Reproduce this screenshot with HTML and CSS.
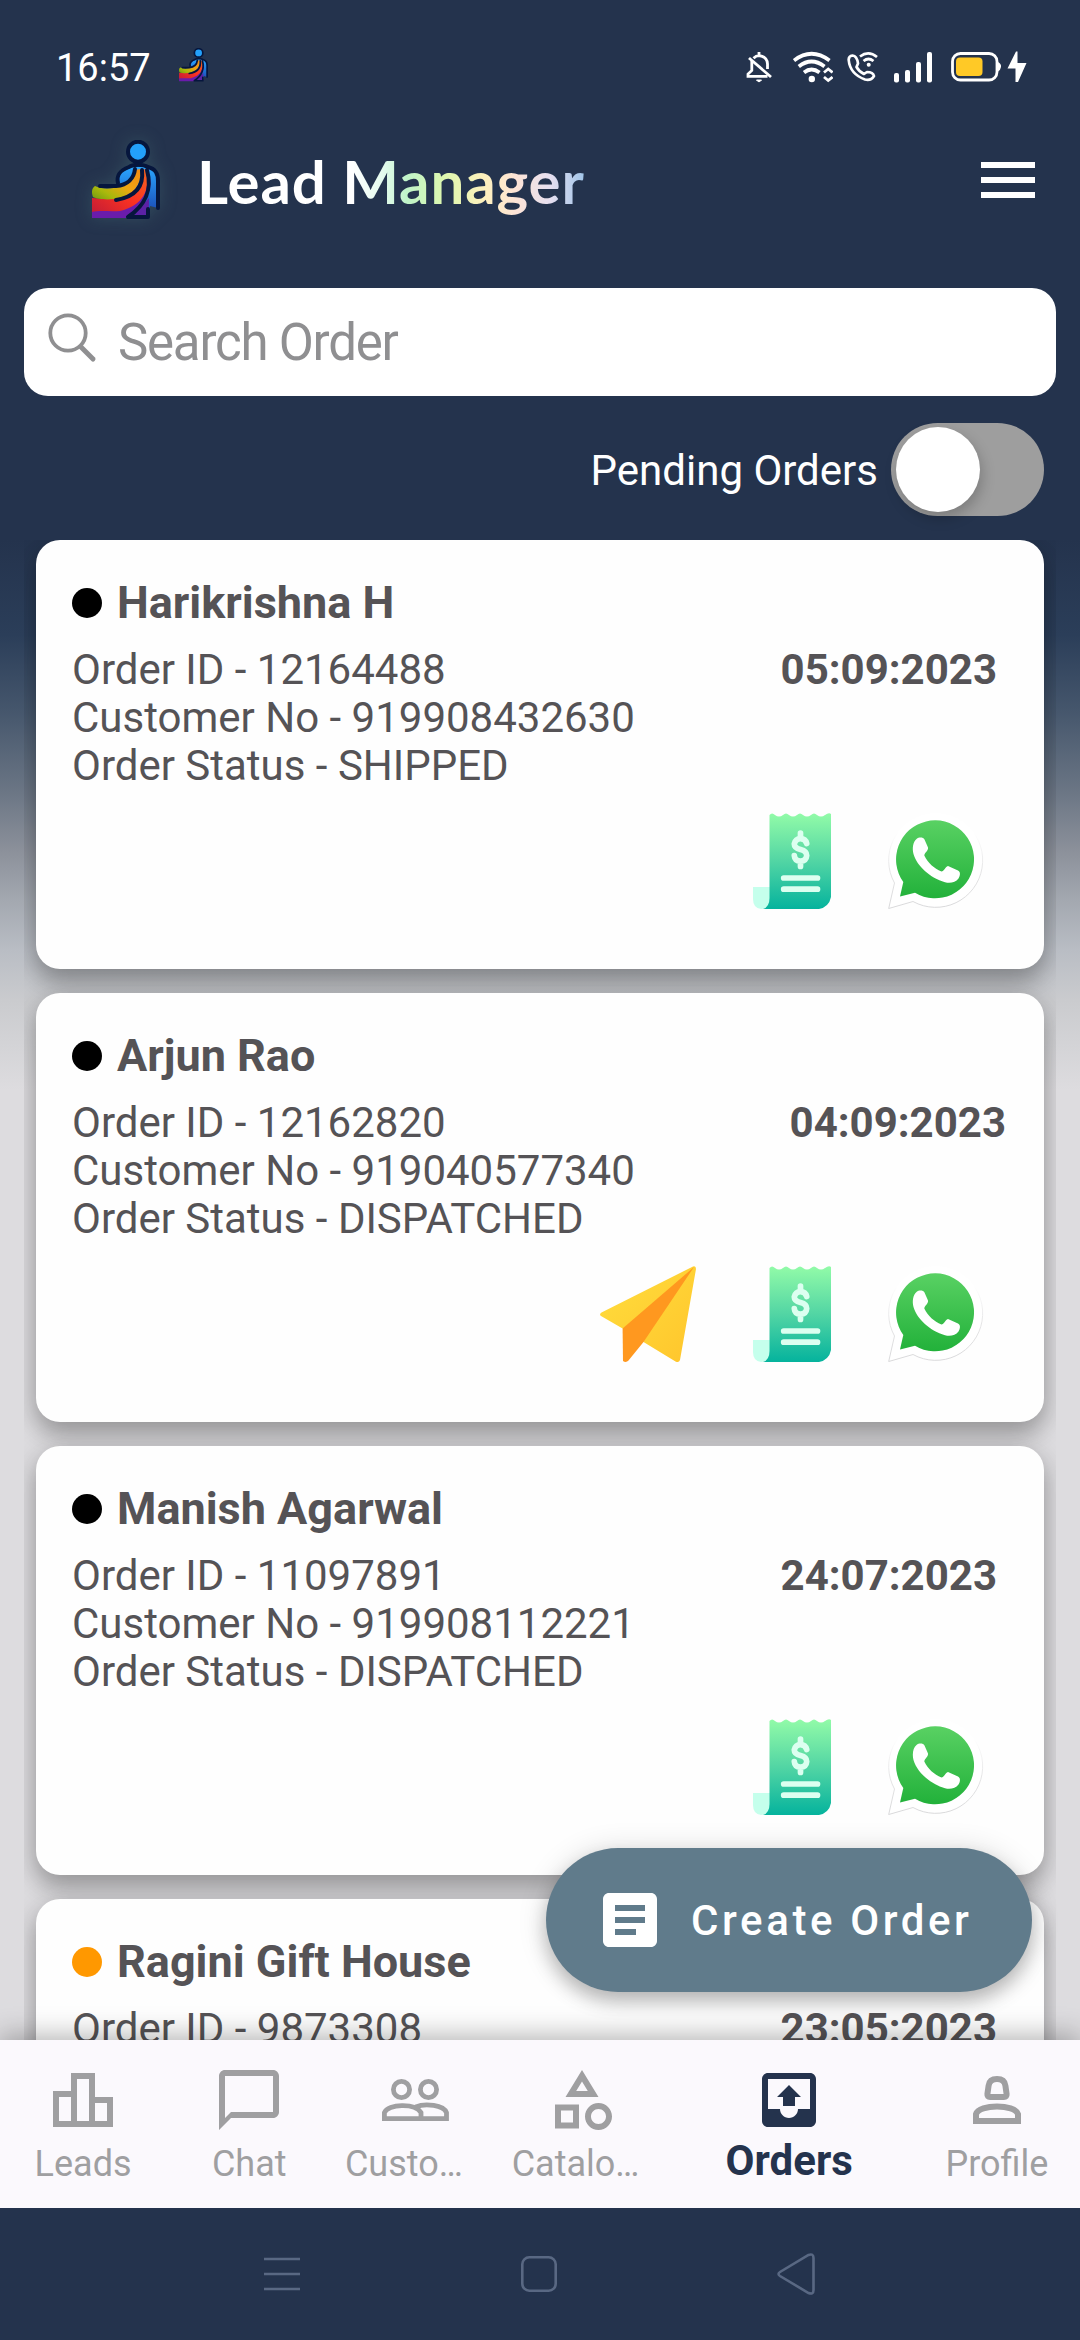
FILE: index.html
```html
<!DOCTYPE html>
<html lang="en">
<head>
<meta charset="utf-8">
<title>Lead Manager</title>
<link rel="stylesheet" href="styles.css">
</head>
<body>
<svg class="defs" width="0" height="0" aria-hidden="true">
  <defs>
    <linearGradient id="g-receipt" x1="0" y1="0" x2="0" y2="1"><stop offset="0" stop-color="#92fba8"/><stop offset=".5" stop-color="#52d5a4"/><stop offset="1" stop-color="#05b39d"/></linearGradient>
    <linearGradient id="g-wa" x1="0" y1="0" x2="0" y2="1"><stop offset="0" stop-color="#59d163"/><stop offset="1" stop-color="#22b13a"/></linearGradient>
    <linearGradient id="g-wa-edge" x1="0" y1="0" x2="0" y2="1"><stop offset=".2" stop-color="#fff"/><stop offset=".6" stop-color="#dededf"/><stop offset="1" stop-color="#cfcfd1"/></linearGradient>
    <linearGradient id="g-plane" x1="0" y1="0" x2="1" y2="1"><stop offset="0" stop-color="#ffde3d"/><stop offset="1" stop-color="#ffc52c"/></linearGradient>
    <linearGradient id="g-blue" x1="0" y1="0" x2="0" y2="1"><stop offset="0" stop-color="#2aa5ff"/><stop offset="1" stop-color="#1a48b4"/></linearGradient>
    <linearGradient id="g-gold" x1="1" y1="0" x2="0" y2="1"><stop offset="0" stop-color="#f58a12"/><stop offset=".45" stop-color="#f0a512"/><stop offset=".75" stop-color="#a9b80c"/><stop offset="1" stop-color="#6f9c12"/></linearGradient>
    <linearGradient id="g-red" x1="1" y1="0" x2="0" y2="1"><stop offset="0" stop-color="#f4661f"/><stop offset=".5" stop-color="#fb3222"/><stop offset="1" stop-color="#c51d35"/></linearGradient>
    <symbol id="logo" viewBox="0 0 68 80">
      <path d="M26 46C24 34 29 31 42 27H54C64 29 66 34 66 44V68L58 66V74H40Z" fill="url(#g-blue)"/>
      <path d="M57 34C62 50 54 62 40 72L34 78H0V66H26C44 64 56 50 57 34Z" fill="#6a1cab"/>
      <path d="M57 58V77H40Z" fill="#5b22a6"/>
      <path d="M53 29C60 50 50 66 28 71C18 72 8 70 0 72V58C12 59 20 60 28 57C44 52 52 42 51 30Z" fill="url(#g-red)"/>
      <path d="M49 29C50 48 38 56 22 59C14 60 5 59 1 57C-1 52 0 48 3 46C12 50 20 49 28 46C38 43 42 38 43 30Z" fill="url(#g-gold)"/>
      <g fill="none" stroke="#06163d" stroke-width="4" stroke-linecap="round" stroke-linejoin="round">
        <circle cx="46" cy="11.700" r="10" fill="#23a0fa"/>
        <path d="M26 43C24 34 29 30 37 27C41 24 51 24 56 27C64 29 66 34 66 41V68"/>
        <path d="M8 46H24C36 45 42 38 43 29"/><path d="M24 60C42 57 52 48 50 30"/>
        <path d="M55 30C61 52 52 66 36 77H56V69"/>
      </g>
    </symbol>
    <symbol id="receipt" viewBox="0 0 96 96">
      <path d="M9 74H27V88Q24 96 17 96Q9 95 9 86Z" fill="#c5ffec"/>
      <path d="M25.500 2Q28 -1 31 2Q35 5 39 2Q42 -1 45 2Q49 5 53 2Q56 -1 59 2Q63 5 67 2Q70 -1 73 2Q77 5 81 2Q85 -1 87 1V84Q85 94 75 96H19Q25.500 94 25.500 85Z" fill="url(#g-receipt)"/>
      <g fill="none" stroke="#dcfff0" stroke-width="5.700" stroke-linecap="round"><path d="M39.700 65H73.500M39.700 76.200H73.500"/><path d="M56.500 20V25M56.500 48V53.500M62.700 30.500Q61.500 25.700 56.500 25.700T50.300 31Q50.300 35 56.500 36.600T62.700 42.500Q62.300 48 56.500 48T50.300 42.500"/></g>
    </symbol>
    <symbol id="whatsapp" viewBox="0 0 96 96">
      <path d="M.7 95.500L6.500 70A47 47 0 1 1 25 88.500Z" fill="#fff" stroke="url(#g-wa-edge)" stroke-width=".8"/>
      <path d="M12 83.500L15.300 69A39 39 0 1 1 27 79.800Z" fill="url(#g-wa)"/>
      <path d="M28.500 26C31 24 35 24 36.500 26.500L40 34.500C40.500 38 36.500 39.500 36.300 42.500C40 50 46 55.500 53.500 58.500C56 58.500 57 54 60 53L70 57.500C73 59 72 63 70.500 65.500C67.500 69.500 62 70.500 57 69.200C42 65 29 53 25.500 41C24 35 25 29 28.500 26Z" fill="#fff"/>
    </symbol>
    <symbol id="plane" viewBox="0 0 96 96">
      <path d="M0 49Q0 47 1.500 46.500L93 .5Q96 -.5 96 3L80 94Q79 97 75.500 95.500L43.500 76L22.600 62.500L1 50Z" fill="url(#g-plane)"/>
      <path d="M22.600 62.500L94 1L43.500 76L28.500 94.500Q26 97 23 95Z" fill="#ff981f"/>
    </symbol>
  </defs>
</svg>

<div class="screen">
  <div class="status">
    <span class="clock">16:57</span>
    <svg class="mini-logo" width="29" height="34"><use href="#logo"/></svg>
    <div class="status-icons">
      <svg class="bell" width="27" height="32" viewBox="0 0 27 32" fill="none" stroke="#fff" stroke-width="2.800"><path d="M13 1V5M7.500 7.200Q10 4.700 13 4.700Q21 5.500 21.500 13V18M5.800 10V19.500L2 23V25.300H21.500"/><path d="M3 7L25 26"/><path d="M10.500 29Q13 32.500 15.500 29Z" fill="#fff" stroke-width="1"/></svg>
      <svg class="wifi" width="40" height="32" viewBox="0 0 40 32" fill="none" stroke="#fff" stroke-width="3.700"><path d="M1 9.500Q18.500 -4 36.500 9.500M5.800 15.500Q18.500 5.500 31.500 15.500M11 21.500Q18.500 15.500 26.500 21.500"/><circle cx="18.800" cy="28" r="3.200" fill="#fff" stroke="none"/><path d="M31 21.500L35.200 18L39.500 21.500M31 26L35.200 29.500L39.500 26" stroke-width="2.800"/></svg>
      <svg class="call" width="31" height="31" viewBox="0 0 31 31" fill="none" stroke="#fff" stroke-width="2.700" stroke-linejoin="round"><path d="M5.500 4.500Q1.500 5 1.700 9Q3 23 18 28.500Q24 30 27 25Q26 21 20 21L17 23Q12 20.500 9.500 16L11 12.500Q10 5 5.500 4.500Z"/><path d="M13 5.500Q21.500 -1 30 6M16.500 10Q21.500 6 26.500 10"/><circle cx="21.700" cy="13.800" r="2" fill="#fff" stroke="none"/></svg>
      <svg class="signal" width="38" height="32" viewBox="0 0 38 32" fill="#fff"><rect y="22" width="5" height="9.500" rx="2"/><rect x="11" y="19" width="5" height="12.500" rx="2"/><rect x="22" y="11" width="5" height="20.500" rx="2"/><rect x="33" y="1" width="5" height="30.500" rx="2"/></svg>
      <svg class="battery" width="51" height="30" viewBox="0 0 51 30"><rect x="1.500" y="1.500" width="44.500" height="26.500" rx="8" fill="none" stroke="#fff" stroke-width="2.800"/><path d="M47 10Q50.500 12 50 15Q49.500 18 47 19.500Z" fill="#fff"/><rect x="5" y="5.500" width="26.500" height="18.500" rx="4" fill="#ffc926"/></svg>
      <svg width="20" height="32" viewBox="0 0 20 32" fill="#fff"><path d="M9 .5L.5 17.500H8.500V31H11L19.500 12H10.500V.5Z"/></svg>
    </div>
  </div>

  <header class="header">
    <svg class="logo" width="68" height="80"><use href="#logo"/></svg>
    <h1 class="title">Lead Manager</h1>
    <svg class="menu" width="54" height="36" viewBox="0 0 54 36" fill="#fff"><path d="M0 0H54V6H0ZM0 15H54V21H0ZM0 30H54V36H0Z"/></svg>
  </header>

  <div class="search">
    <svg width="50" height="50" viewBox="0 0 50 50" fill="none" stroke="#8f8f91" stroke-linecap="round"><circle cx="20" cy="20" r="17.700" stroke-width="3.800"/><path d="M33 34L45 46" stroke-width="5"/></svg>
    <span>Search Order</span>
  </div>

  <div class="filter">
    <span>Pending Orders</span>
    <div class="toggle"><div class="knob"></div></div>
  </div>

  <main class="list">
    <article class="card">
      <div class="name"><i class="dot"></i><span>Harikrishna H</span></div>
      <div class="info">
        <div>Order ID - 12164488<br>Customer No - 919908432630<br>Order Status - SHIPPED</div>
        <b class="date">05:09:2023</b>
      </div>
      <div class="actions"><svg width="96" height="96"><use href="#receipt"/></svg><svg width="96" height="96"><use href="#whatsapp"/></svg></div>
    </article>
    <article class="card">
      <div class="name"><i class="dot"></i><span>Arjun Rao</span></div>
      <div class="info">
        <div>Order ID - 12162820<br>Customer No - 919040577340<br>Order Status - DISPATCHED</div>
        <b class="date date-wide">04:09:2023</b>
      </div>
      <div class="actions"><svg width="96" height="96"><use href="#plane"/></svg><svg width="96" height="96"><use href="#receipt"/></svg><svg width="96" height="96"><use href="#whatsapp"/></svg></div>
    </article>
    <article class="card">
      <div class="name"><i class="dot"></i><span>Manish Agarwal</span></div>
      <div class="info">
        <div>Order ID - 11097891<br>Customer No - 919908112221<br>Order Status - DISPATCHED</div>
        <b class="date">24:07:2023</b>
      </div>
      <div class="actions"><svg width="96" height="96"><use href="#receipt"/></svg><svg width="96" height="96"><use href="#whatsapp"/></svg></div>
    </article>
    <article class="card">
      <div class="name"><i class="dot dot-pending"></i><span>Ragini Gift House</span></div>
      <div class="info">
        <div>Order ID - 9873308</div>
        <b class="date">23:05:2023</b>
      </div>
    </article>
  </main>

  <button class="fab">
    <svg width="54" height="54" viewBox="3 3 18 18" fill="#fff"><path d="M19 3H5c-1.100 0-2 .9-2 2v14c0 1.100.9 2 2 2h14c1.100 0 2-.9 2-2V5c0-1.100-.9-2-2-2zm-5 14H7v-2h7v2zm3-4H7v-2h10v2zm0-4H7V7h10v2z"/></svg>
    <span>Create Order</span>
  </button>

  <nav class="tabs">
    <a class="tab"><svg viewBox="0 0 24 24"><path d="M16 11V3H8v6H2v12h20V11h-6zm-6-6h4v14h-4V5zm-6 6h4v8H4v-8zm16 8h-4v-6h4v6z"/></svg><span>Leads</span></a>
    <a class="tab"><svg viewBox="0 0 24 24"><path d="M20 2H4c-1.100 0-2 .9-2 2v18l4-4h14c1.100 0 2-.9 2-2V4c0-1.100-.9-2-2-2zm0 14H6l-2 2V4h16v12z"/></svg><span>Chat</span></a>
    <a class="tab"><svg viewBox="0 0 24 24" fill="none" stroke="#9f9fa1" stroke-width="1.600"><circle cx="7.500" cy="8.500" r="2.700"/><circle cx="16.500" cy="8.500" r="2.700"/><path d="M1.800 18.200V16.200C3 13.300 12 12.900 14 16.200V18.200ZM12.200 14.300C15.500 13 21.500 13.700 22.500 16.200V18.200H14"/></svg><span class="label-customers">Custo…</span></a>
    <a class="tab"><svg viewBox="0 0 24 24"><path d="M12 2l-5.500 9h11L12 2zm0 3.840L13.930 9h-3.870L12 5.840zM17.500 13c-2.490 0-4.500 2.010-4.500 4.500s2.010 4.500 4.500 4.500 4.500-2.010 4.500-4.500-2.010-4.500-4.500-4.500zm0 7c-1.380 0-2.500-1.120-2.500-2.500s1.120-2.500 2.500-2.500 2.500 1.120 2.500 2.500-1.120 2.500-2.500 2.500zM3 21.500h8v-8H3v8zm2-6h4v4H5v-4z"/></svg><span class="label-catalog">Catalo…</span></a>
    <a class="tab tab-active"><svg viewBox="0 0 24 24"><path d="M19 3H5c-1.100 0-2 .9-2 2v14c0 1.100.9 2 2 2h14c1.100 0 2-.9 2-2V5c0-1.100-.9-2-2-2zm0 12h-4c0 1.660-1.350 3-3 3s-3-1.340-3-3H5V5h14v10z"/><path d="M8 11H10V14H14V11H16L12 7Z"/></svg><span>Orders</span></a>
    <a class="tab"><svg viewBox="0 0 24 24" fill="none" stroke="#9f9fa1" stroke-width="2"><path d="M9.200 7.200Q9.500 5 12 5T14.800 7.200L15.200 10Q15.300 11 14.300 11H9.700Q8.700 11 8.800 10Z"/><path d="M5 19V16.700C6 13.300 18 13.300 19 16.700V19Z"/></svg><span>Profile</span></a>
  </nav>

  <div class="sysnav">
    <svg width="36" height="34" viewBox="0 0 36 34"><path d="M0 2H36M0 17H36M0 32H36"/></svg>
    <svg width="36" height="36" viewBox="0 0 36 36"><rect x="1.300" y="1.300" width="33.400" height="33.400" rx="7"/></svg>
    <svg width="38" height="42" viewBox="0 0 38 42"><path d="M31.500 2Q36.500 0 36.500 5V37Q36.500 42 31.500 40L3 23Q0 21 3 19Z"/></svg>
  </div>
</div>
</body>
</html>
```
FILE: styles.css
```css
* { box-sizing: border-box; }
body { margin: 0; font-family: Roboto, "Liberation Sans", sans-serif; }
.defs { position: absolute; }
svg { display: block; flex: none; }

.screen {
  position: relative;
  display: flex;
  flex-direction: column;
  width: 1080px;
  height: 2340px;
  overflow: hidden;
  background: linear-gradient(180deg, #24334d 0, #24334d 540px, #2b3e59 635px, #45566c 710px, #6a7584 790px, #8b909a 850px, #a3a8b0 900px, #b9bdc4 950px, #cacbce 1000px, #dddcdf 1090px, #dddcdf 100%);
}

.status {
  display: flex;
  align-items: flex-start;
  height: 140px;
  padding: 51px 53px 0 56px;
  color: #fff;
}
.clock { width: 123px; font-size: 38px; line-height: 35px; }
.mini-logo { margin-top: -3px; }
.status-icons { display: flex; margin-left: auto; }
.bell { margin-right: 20px; }
.wifi { margin-right: 14px; }
.call { margin-right: 16px; }
.signal { margin-right: 19px; }
.battery { margin: 1px 5px 0 0; }

.header { display: flex; height: 148px; padding: 0 45px 0 92px; }
.logo { filter: drop-shadow(0 0 8px rgba(80, 130, 130, .3)); }
.title {
  margin: 3px 0 0 37px;
  font: 700 60px/76px Lato, sans-serif;
  letter-spacing: .9px;
  white-space: nowrap;
  color: transparent;
  background: linear-gradient(90deg, #fff 0, #fff 40%, #e4fbee 48%, #bff4c9 54%, #def7ae 64%, #fdf0bd 74%, #fde4d6 82%, #e6dff0 91%, #9fc4e8 100%);
  -webkit-background-clip: text;
  background-clip: text;
}
.menu { margin: 22px 0 0 auto; }

.search {
  display: flex;
  flex: none;
  height: 108px;
  margin: 0 24px;
  padding: 25px 24px 0;
  border-radius: 24px;
  background: #fff;
}
.search span { margin: 2px 0 0 20px; font-size: 51px; line-height: 56px; letter-spacing: -1.23px; color: #8f8f91; }

.filter {
  display: flex;
  flex: none;
  justify-content: flex-end;
  height: 144px;
  padding: 27px 36px 0 0;
  font-size: 42px;
  line-height: 95px;
  color: #fff;
}
.toggle { width: 153px; height: 93px; margin-left: 13px; padding: 4px 5px; border-radius: 47px; background: #9e9e9e; }
.knob { width: 84px; height: 85px; border-radius: 50%; background: #fff; box-shadow: 2px 6px 14px rgba(0, 0, 0, .22); }

.list {
  display: flex;
  flex-direction: column;
  gap: 24px;
  height: 1500px;
  margin: 0 24px;
  padding: 0 12px;
  overflow: hidden;
}
.card {
  flex: none;
  height: 429px;
  padding: 36px 36px 0;
  border-radius: 24px;
  background: #fefefe;
  box-shadow: 0 14px 22px rgba(0, 0, 0, .22), 0 4px 30px rgba(0, 0, 0, .16);
  color: #555356;
}
.name { display: flex; align-items: center; gap: 15px; height: 54px; font-size: 45px; font-weight: 700; }
.name span { margin-top: -2px; }
.dot { width: 30px; height: 30px; border-radius: 50%; background: #000; }
.dot-pending { background: #ff9800; }
.info { display: flex; justify-content: space-between; margin-top: 16px; font-size: 42px; line-height: 48px; }
.date { margin-right: 11px; }
.date-wide { margin-right: 2px; }
.actions { display: flex; justify-content: flex-end; gap: 48px; margin: 23px 24px 0 0; }

.fab {
  position: absolute;
  left: 546px;
  top: 1848px;
  display: flex;
  align-items: center;
  width: 486px;
  height: 144px;
  padding: 0 0 0 57px;
  border: 0;
  border-radius: 72px;
  background: #607b8b;
  box-shadow: 0 10px 18px rgba(0, 0, 0, .22), 0 2px 30px rgba(0, 0, 0, .14);
  color: #fff;
  font: 500 42px/50px Roboto, sans-serif;
  letter-spacing: 3.6px;
  white-space: nowrap;
}
.fab span { margin: 2px 0 0 34px; }

.tabs {
  position: relative;
  display: grid;
  flex: none;
  grid-template-columns: 1fr 1fr 1fr 1fr 1.5fr 1fr;
  height: 168px;
  background: #fbf9fd;
  box-shadow: 0 -4px 26px rgba(0, 0, 0, .3);
}
.tab { display: flex; flex-direction: column; align-items: center; padding-top: 24px; font-size: 36px; line-height: 42px; color: #9f9fa1; fill: #9f9fa1; }
.tab svg { width: 72px; height: 72px; }
.tab span { margin-top: 7px; }
.tab .label-customers { margin-right: 23px; }
.tab .label-catalog { margin-right: 12px; }
.tab-active { color: #24334d; fill: #24334d; font-size: 42px; font-weight: 700; }
.tab-active span { margin-top: 4px; }

.sysnav {
  position: relative;
  display: flex;
  flex: none;
  align-items: center;
  justify-content: space-between;
  height: 132px;
  padding: 0 265px 0 264px;
  background: #24334d;
  fill: none;
  stroke: #596883;
  stroke-width: 2.6;
}
```
